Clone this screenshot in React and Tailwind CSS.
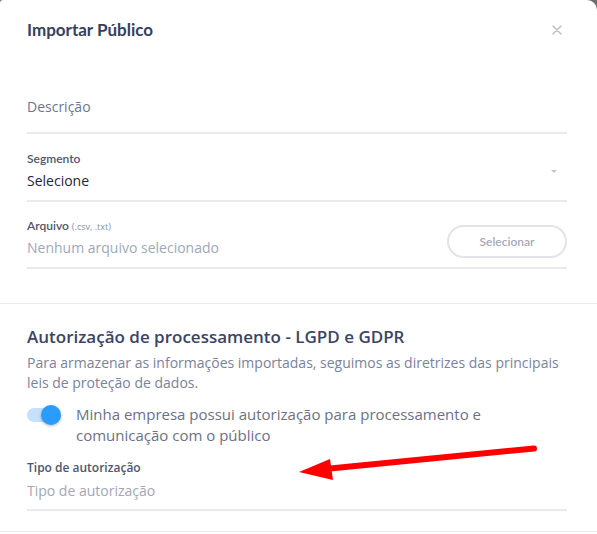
import React from "react";

export default function App() {
  return (
    <div className="w-[597px] h-[534px] bg-[#6d6d6d] overflow-hidden relative" style={{ fontFamily: '"Open Sans", sans-serif' }}>
      <div className="w-[597px] h-[534px] bg-white rounded-tl-[3px] rounded-tr-[10px] overflow-hidden">
        {/* Header */}
        <div className="flex items-center justify-between pl-[27px] pr-[35px] pt-[15px] h-[44px]">
          <h1 className="text-[17px] font-bold text-[#363f5e] leading-none" style={{ fontFamily: 'Lato, sans-serif' }}>
            Importar Público
          </h1>
          <svg width="10" height="10" viewBox="0 0 10 10">
            <path d="M1 1L9 9M9 1L1 9" stroke="#bfc2cb" strokeWidth="1.6" strokeLinecap="round" />
          </svg>
        </div>

        <div className="px-[27px] pr-[30px]">
          {/* Descrição */}
          <div className="pt-[53px] border-b-2 border-[#e9eaef] pb-[15px]">
            <div className="text-[14px] text-[#6e7590] leading-[20px]">Descrição</div>
          </div>

          {/* Segmento */}
          <div className="pt-[17px] border-b-2 border-[#e9eaef] pb-[9px] flex items-end justify-between">
            <div>
              <div className="text-[12px] font-semibold text-[#4f566e] leading-[16px]" style={{ fontFamily: 'Lato, sans-serif' }}>Segmento</div>
              <div className="text-[14px] text-[#1f2540] leading-[20px] mt-[4px]">Selecione</div>
            </div>
            <svg width="8" height="5" viewBox="0 0 8 5" className="mb-[17px] mr-[9px]">
              <path d="M1 1h6L4 4z" fill="#c3c6cf" />
            </svg>
          </div>

          {/* Arquivo */}
          <div className="pt-[16px] border-b-2 border-[#e9eaef] pb-[9px] flex items-center justify-between">
            <div>
              <div className="text-[12px] font-semibold text-[#4f566e] leading-[16px]" style={{ fontFamily: 'Lato, sans-serif' }}>
                Arquivo <span className="text-[9px] font-normal text-[#8a90a3]" style={{ fontFamily: '"Open Sans", sans-serif' }}>(.csv, .txt)</span>
              </div>
              <div className="text-[14px] text-[#a2a7b6] leading-[20px] mt-[3px]">Nenhum arquivo selecionado</div>
            </div>
            <button className="w-[120px] h-[33px] rounded-full border-2 border-[#e3e4ea] text-[12px] font-semibold text-[#a5a9b8] mt-[7px]" style={{ fontFamily: 'Lato, sans-serif' }}>
              Selecionar
            </button>
          </div>
        </div>

        {/* Divider */}
        <div className="mt-[34px] border-t border-[#ebebef]" />

        <div className="px-[27px] pr-[30px]">
          <h2 className="pt-[21px] text-[17px] font-semibold text-[#3b4463] leading-[24px]">
            Autorização de processamento - LGPD e GDPR
          </h2>
          <p className="mt-[4px] text-[14px] text-[#7b8299] leading-[20px]">
            Para armazenar as informações importadas, seguimos as diretrizes das principais leis de proteção de dados.
          </p>

          <div className="mt-[11px] flex items-start gap-[15px]">
            <div className="relative w-[34px] h-[20px] mt-[1px] shrink-0">
              <div className="absolute left-0 top-[3px] w-[34px] h-[14px] rounded-full bg-[#c4e1fc]" />
              <div className="absolute right-0 top-0 w-[20px] h-[20px] rounded-full bg-[#2a9bff] shadow-[0_1px_3px_rgba(0,0,0,0.3)]" />
            </div>
            <div className="text-[15px] text-[#6b7186] leading-[21px]">
              Minha empresa possui autorização para processamento e comunicação com o público
            </div>
          </div>

          <div className="pt-[14px] border-b-2 border-[#e9eaef] pb-[8px]">
            <div className="text-[12px] font-semibold text-[#4f566e] leading-[16px]">Tipo de autorização</div>
            <div className="text-[14px] text-[#a2a7b6] leading-[20px] mt-[5px]">Tipo de autorização</div>
          </div>
        </div>

        <div className="mt-[20px] border-t border-[#ebebef]" />
      </div>

      {/* Red arrow annotation */}
      <svg className="absolute left-0 top-0" width="597" height="534" viewBox="0 0 597 534">
        <line x1="534" y1="448.5" x2="325" y2="469" stroke="#ff0000" strokeWidth="6" strokeLinecap="round" />
        <polygon points="299,472 330,459 333,480" fill="#ff0000" />
      </svg>
    </div>
  );
}
